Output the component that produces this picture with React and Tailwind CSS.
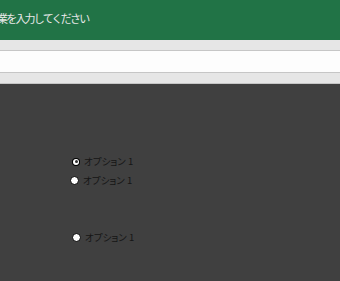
export default function App() {
  const jp = { fontFamily: '"Noto Sans CJK JP", "Noto Sans", sans-serif' };
  return (
    <div className="w-[340px] h-[281px] flex flex-col overflow-hidden bg-[#404040]" style={jp}>
      <div className="h-[40px] bg-[#217346] flex items-center overflow-hidden pb-[4px]">
        <span className="ml-[-3px] text-[11px] tracking-[-1.8px] text-[#e8e8e8] whitespace-nowrap">業を入力してください</span>
      </div>
      <div className="h-[10px] bg-[#e6e6e6]" />
      <div className="h-[23px] bg-[#fdfdfd] border-y border-[#c6c6c6]" />
      <div className="h-[11px] bg-[#e6e6e6] border-b border-[#c6c6c6]" />
      <div className="relative flex-1">
        <div className="absolute left-[72px] top-[73px] flex items-center gap-[4px]">
          <span className="w-[8px] h-[8px] rounded-full bg-black flex items-center justify-center">
            <span className="w-[6px] h-[6px] rounded-full bg-white flex items-center justify-center">
              <span className="w-[3px] h-[3px] rounded-full bg-[#303030]" />
            </span>
          </span>
          <span className="text-[9.5px] leading-none text-[#151515] [font-feature-settings:'palt']">オプション 1</span>
        </div>
        <div className="absolute left-[70px] top-[92px] flex items-center gap-[4px]">
          <span className="w-[9px] h-[9px] rounded-full bg-white border border-black" />
          <span className="text-[9.5px] leading-none text-[#151515] [font-feature-settings:'palt']">オプション 1</span>
        </div>
        <div className="absolute left-[72px] top-[149px] flex items-center gap-[4px]">
          <span className="w-[9px] h-[9px] rounded-full bg-white border border-black" />
          <span className="text-[9.5px] leading-none text-[#151515] [font-feature-settings:'palt']">オプション 1</span>
        </div>
      </div>
    </div>
  );
}
